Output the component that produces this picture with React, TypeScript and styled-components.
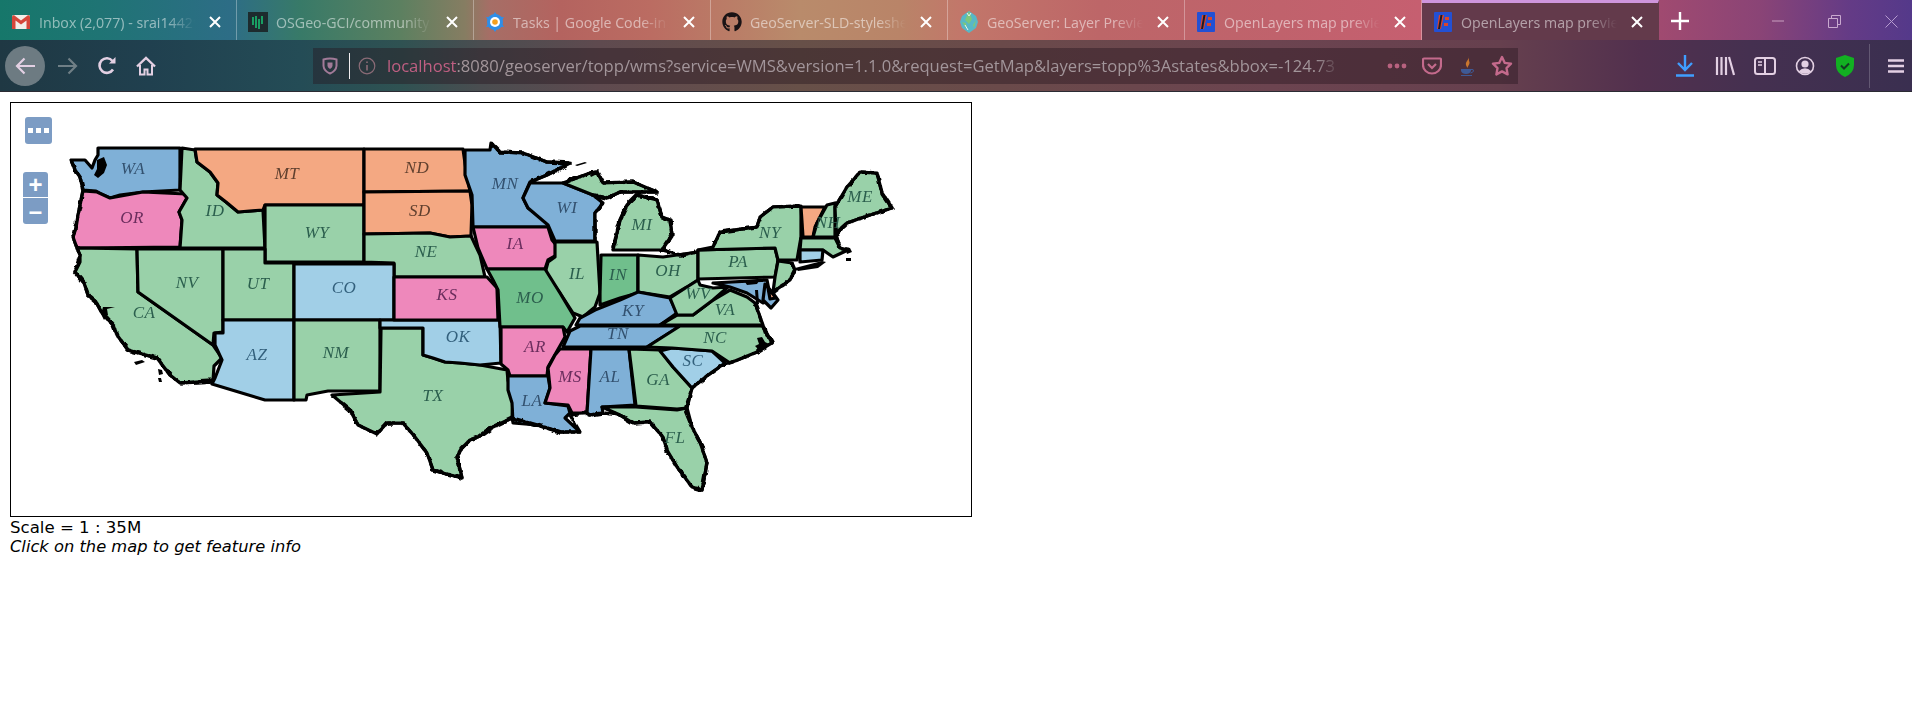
import React from "react";
import styled, { createGlobalStyle } from "styled-components";
import { FaGithub } from "react-icons/fa";

const Global = createGlobalStyle`
  html, body { margin: 0; padding: 0; background: #fff; overflow: hidden; }
  body { font-family: "DejaVu Sans", sans-serif; }
`;

const Chrome = styled.header`
  height: 92px;
  display: flex;
  flex-direction: column;
  border-bottom: 1px solid #2b2b33;
  box-sizing: border-box;
  font-family: "Open Sans", "Noto Sans", sans-serif;
`;
const TabStrip = styled.div`
  height: 40px;
  display: flex;
  background: linear-gradient(90deg, #16776a 0, #1f7474 100px, #2d6d86 230px, #387a68 300px, #5c8060 400px, #867d62 465px, #a66e66 490px, #b4635f 560px, #bb6c62 650px, #b98b6b 800px, #b98468 900px, #c2776a 960px, #bd6668 1100px, #c0626c 1280px, #c65f70 1420px, #a04a70 1660px, #8a4476 1760px, #643b86 1850px, #54398a 1912px);
`;
const Tab = styled.div<{ $active?: boolean }>`
  width: 237px;
  height: 40px;
  box-sizing: border-box;
  padding: 4px 9px 0 11px;
  display: flex;
  align-items: center;
  gap: 8px;
  position: relative;
  background: ${(p) => (p.$active ? "#633a4b" : "transparent")};
  border-right: 1px solid ${(p) => (p.$active ? "transparent" : "rgba(255,255,255,.32)")};
  border-top: ${(p) => (p.$active ? "3px solid #cf95dd" : "0")};
  padding-top: ${(p) => (p.$active ? "1px" : "4px")};
`;
const TabIcon = styled.span`
  width: 20px;
  height: 20px;
  flex: none;
  display: flex;
  align-items: center;
  justify-content: center;
`;
const TabTitle = styled.span`
  flex: 1;
  min-width: 0;
  white-space: nowrap;
  overflow: hidden;
  font-size: 14.2px;
  color: rgba(255, 255, 255, 0.52);
  mask-image: linear-gradient(to right, #000 82%, transparent 100%);
`;
const TabClose = styled.span`
  width: 24px;
  height: 24px;
  flex: none;
  display: flex;
  align-items: center;
  justify-content: center;
`;
const NewTab = styled.span`
  width: 42px;
  display: flex;
  align-items: center;
  justify-content: center;
  padding-top: 2px;
`;
const WindowControls = styled.div`
  margin-left: auto;
  display: flex;
`;
const WinButton = styled.span<{ $w: number; $ml?: number }>`
  width: ${(p) => p.$w}px;
  margin-left: ${(p) => p.$ml ?? 0}px;
  display: flex;
  align-items: center;
  justify-content: center;
  padding-top: 2px;
`;
const NavBar = styled.nav`
  flex: 1;
  display: flex;
  align-items: center;
  padding-left: 5px;
  background: linear-gradient(90deg, #1f3843 0, #20404f 150px, #244c56 300px, #2f5252 400px, #4a4d50 480px, #5f4a4f 600px, #675048 800px, #6a4a4a 1000px, #6c4450 1272px, #66404e 1500px, #52304e 1640px, #453050 1750px, #3a2f50 1912px);
`;
const BackButton = styled.span`
  width: 40px;
  height: 40px;
  margin-right: 3.5px;
  border-radius: 50%;
  background: #6d7b82;
  display: flex;
  align-items: center;
  justify-content: center;
`;
const NavButton = styled.span`
  width: 39px;
  height: 40px;
  display: flex;
  align-items: center;
  justify-content: center;
`;
const UrlBar = styled.div`
  width: 1205px;
  height: 36px;
  margin-left: 147.5px;
  display: flex;
  align-items: center;
  padding-left: 8px;
  box-sizing: border-box;
  background: rgba(38, 22, 30, 0.42);
`;
const UrlIcon = styled.span`
  width: 18px;
  height: 18px;
  flex: none;
  display: flex;
  align-items: center;
  justify-content: center;
`;
const Caret = styled.span`
  width: 1px;
  height: 26px;
  margin: 0 8px 0 10px;
  background: #f2eef0;
  flex: none;
`;
const UrlText = styled.span`
  width: 958px;
  margin: 0 34px 0 11px;
  flex: none;
  white-space: nowrap;
  overflow: hidden;
  font-size: 16.6px;
  color: #a2959a;
  mask-image: linear-gradient(to right, #000 97%, transparent 99.5%);
`;
const UrlHost = styled.span`
  color: #bf5f82;
`;
const PageAction = styled.span`
  width: 35px;
  height: 36px;
  flex: none;
  display: flex;
  align-items: center;
  justify-content: center;
`;
const ToolGroup = styled.div`
  margin-left: auto;
  display: flex;
  align-items: center;
`;
const ToolButton = styled.span`
  width: 40px;
  height: 40px;
  display: flex;
  align-items: center;
  justify-content: center;
`;
const ToolDivider = styled.span`
  width: 1px;
  height: 44px;
  margin: 0 10px 0 4px;
  background: rgba(255, 255, 255, 0.2);
`;
const MenuButton = styled.span`
  width: 32px;
  height: 40px;
  display: flex;
  align-items: center;
  justify-content: center;
`;
const Page = styled.main`
  padding: 10px;
  color: #000;
`;
const MapFrame = styled.div`
  position: relative;
  width: 962px;
  height: 415px;
  box-sizing: border-box;
  border: 1px solid #000;
  overflow: hidden;
  background: #fff;
`;
const MapCanvas = styled.svg`
  display: block;
  width: 960px;
  height: 413px;
`;
const StateLabel = styled.text`
  font-family: "Liberation Serif", serif;
  font-style: italic;
  font-size: 17px;
  text-anchor: middle;
  dominant-baseline: central;
  letter-spacing: 0.5px;
`;
const OlControl = styled.button<{ $top: number; $left: number; $w: number; $h: number; $radius: string }>`
  position: absolute;
  top: ${(p) => p.$top}px;
  left: ${(p) => p.$left}px;
  width: ${(p) => p.$w}px;
  height: ${(p) => p.$h}px;
  padding: 0;
  border: 0;
  border-radius: ${(p) => p.$radius};
  background: #7c9cc4;
  color: #fff;
  font: bold 24px/1 "Liberation Sans", sans-serif;
  display: flex;
  align-items: center;
  justify-content: center;
  gap: 3px;
`;
const Dot = styled.i`
  width: 5px;
  height: 5px;
  background: #fff;
  display: block;
`;
const Scale = styled.div`
  font-size: 16.6px;
  line-height: 19px;
  margin-top: 1px;
`;
const Hint = styled.div`
  font-size: 16.3px;
  line-height: 19px;
  font-style: italic;
`;

const C = { g: "#99d1a9", b: "#7fb0d7", p: "#ee88bb", o: "#f4a882", l: "#a1cfe7", d: "#70bf8c" };
type Shape = { id: string; c: string; d: string };
const shapes: Shape[] = [
  { id: "WA", c: C.b, d: "98,148 180,148 180,190 143,192 120,195 110,198 101,194 96,191 83,190 80,177 75,170 71,160 85,160 92,168 95,160 98,155" },
  { id: "OR", c: C.p, d: "83,191 97,192 110,198 143,192 186,194 187,198 179,212 182,220 180,247 77,248 73,237 76,228 78,215" },
  { id: "CA", c: C.g, d: "77,248 137,249 138,292 213,345 222,358 214,366 213,381 180,383 170,375 157,358 135,352 128,350 117,335 113,325 102,313 96,302 88,295 84,283 75,272 80,262 80,255" },
  { id: "NV", c: C.g, d: "137,249 223,249 223,332 214,333 213,345 138,292" },
  { id: "ID", c: C.g, d: "182,148 195,150 197,162 210,172 218,183 217,195 226,202 238,212 263,210 265,248 180,248 182,220 179,212 187,198 180,190" },
  { id: "MT", c: C.o, d: "195,149 364,149 364,205 265,205 263,210 238,212 226,202 217,195 218,183 210,172 197,162" },
  { id: "WY", c: C.g, d: "265,205 364,205 364,262 265,262" },
  { id: "ND", c: C.o, d: "364,149 463,149 466,170 470,191 364,192" },
  { id: "SD", c: C.o, d: "364,192 470,191 472,205 471,236 450,237 430,233 364,234" },
  { id: "NE", c: C.g, d: "364,234 430,233 450,237 471,236 480,255 485,277 394,277 394,263 364,262" },
  { id: "UT", c: C.g, d: "223,249 265,249 265,263 294,263 294,320 223,320" },
  { id: "CO", c: C.l, d: "294,264 394,264 394,320 294,320" },
  { id: "AZ", c: C.l, d: "223,320 294,320 294,400 265,400 212,384 215,378 222,360 215,345 215,333 223,333" },
  { id: "NM", c: C.g, d: "294,320 380,320 380,391 328,391 307,395 306,400 294,400" },
  { id: "TX", c: C.g, d: "381,328 423,328 423,355 433,358 445,362 460,363 480,365 507,370 508,380 513,400 512,418 493,427 480,436 470,440 462,448 457,457 462,478 443,473 433,470 427,453 415,437 403,423 387,423 377,434 358,425 350,410 332,395 380,392" },
  { id: "OK", c: C.l, d: "380,320 500,320 501,363 480,365 460,363 445,362 433,358 423,355 423,328 380,328" },
  { id: "KS", c: C.p, d: "394,277 487,277 497,288 498,320 394,320" },
  { id: "MN", c: C.b, d: "465,150 490,150 491,143 500,152 523,153 547,162 570,163 547,175 530,182 523,198 528,208 547,222 548,227 473,227 472,195 465,175" },
  { id: "WI", c: C.b, d: "530,183 563,183 593,195 603,203 595,213 595,241 555,241 548,225 528,208 523,198" },
  { id: "IA", c: C.p, d: "473,227 548,227 552,240 562,252 548,260 545,269 487,269 478,248" },
  { id: "IL", c: C.g, d: "555,242 597,242 600,293 595,307 583,317 573,313 560,293 545,273 548,262 555,257" },
  { id: "IN", c: C.d, d: "601,255 638,255 638,293 620,298 600,305 600,293" },
  { id: "OH", c: C.g, d: "638,255 663,257 698,252 698,280 687,287 670,297 638,292" },
  { id: "MI", c: C.g, d: "613,250 620,220 627,205 637,195 657,200 662,217 670,220 672,235 662,250" },
  { id: "UP", c: C.g, d: "563,183 590,173 597,172 603,183 633,182 657,192 637,192 620,192 607,198 593,195" },
  { id: "MO", c: C.d, d: "487,269 545,269 560,293 575,318 567,332 563,327 500,327 498,290 493,280" },
  { id: "AR", c: C.p, d: "501,327 563,327 565,337 548,367 547,376 510,376 508,370 501,364" },
  { id: "LA", c: C.b, d: "508,376 548,376 550,388 545,403 568,406 570,413 565,418 580,432 560,432 537,425 513,423 512,403 508,390" },
  { id: "MS", c: C.p, d: "560,349 591,349 587,413 572,413 568,405 545,403 550,388 548,368 555,355" },
  { id: "TN", c: C.b, d: "570,331 580,326 680,326 647,347 563,347" },
  { id: "KY", c: C.b, d: "576,325 580,318 595,310 620,300 638,292 670,298 677,313 660,325" },
  { id: "AL", c: C.b, d: "591,349 629,349 635,405 602,407 603,413 590,415 587,413" },
  { id: "GA", c: C.g, d: "629,349 660,350 673,367 692,388 687,408 677,409 636,406" },
  { id: "SC", c: C.l, d: "660,351 672,348 712,351 725,363 708,375 692,388 673,367" },
  { id: "NC", c: C.g, d: "647,347 680,326 763,326 772,343 757,352 730,363 712,351 672,348" },
  { id: "FL", c: C.g, d: "602,407 636,407 677,410 687,408 692,427 700,442 707,463 702,490 692,487 677,467 667,450 663,437 650,422 633,423 620,415" },
  { id: "VA", c: C.g, d: "660,325 677,315 693,315 713,300 730,290 747,297 755,303 763,325" },
  { id: "WV", c: C.g, d: "670,298 687,287 698,280 700,285 713,288 728,287 713,300 693,315 677,315" },
  { id: "PA", c: C.g, d: "698,250 775,248 778,260 775,277 698,279" },
  { id: "NY", c: C.g, d: "698,250 713,247 720,232 757,227 760,217 773,207 801,206 801,237 797,260 778,260 775,248" },
  { id: "NJ", c: C.g, d: "778,261 792,263 795,270 790,280 773,292 775,277" },
  { id: "MD", c: C.b, d: "713,283 767,280 771,300 763,303 747,293 730,287" },
  { id: "DM", c: C.b, d: "765,284 772,292 778,300 771,308 763,300" },
  { id: "DE", c: C.o, d: "768,288 776,298 770,299" },
  { id: "VT", c: C.o, d: "801,207 825,207 815,227 813,237 803,237" },
  { id: "NH", c: C.g, d: "827,205 835,203 835,237 813,237 817,223" },
  { id: "ME", c: C.g, d: "835,207 847,187 860,172 877,173 882,193 892,208 870,215 847,223 836,233" },
  { id: "MA", c: C.g, d: "801,238 835,238 840,248 848,250 833,257 823,250 800,250" },
  { id: "CT", c: C.l, d: "800,250 823,250 822,260 800,262" },
];
const coast = [
  "71,160 75,170 80,177 83,190 78,215 73,237 77,248 80,255 75,272 84,283 88,295 96,302 102,313 113,325 117,335 128,350 157,358 170,375 180,383 213,381",
  "332,395 350,410 358,425 377,434 387,423 403,423 415,437 427,453 433,470 443,473 462,478 457,457 462,448 470,440 480,436 493,427 512,418 537,425 560,432 580,432 570,415 586,413 590,415 603,413 620,415 633,423 650,422 663,437 667,450 677,467 692,487 702,490 707,463 700,442 692,427 685,410 692,388 708,375 725,363 730,363 757,352 772,343 763,326 755,303",
  "491,143 500,152 523,153 547,162 570,163 547,175 530,182",
  "563,183 590,173 597,172 603,183 633,182 657,192 637,192 620,192 607,198 593,195 603,203 595,213 595,240",
  "613,250 620,220 627,205 637,195 657,200 662,217 670,220 672,235 662,250 680,255 698,252",
  "713,247 720,232 757,227 760,217 773,207 801,206",
  "835,207 847,187 860,172 877,173 882,193 892,208 870,215 847,223 836,233 840,248 848,250",
  "792,263 795,270 790,280 773,292",
];
const Ink = { g: "#2c5f4e", b: "#33516f", p: "#6b2d5d", o: "#60402f", l: "#33607c" };
const labels: [string, number, number, string][] = [
  ["WA", 133, 168, Ink.b], ["MT", 287, 173, Ink.o], ["ND", 417, 167, Ink.o], ["SD", 420, 210, Ink.o], ["MN", 505, 183, Ink.b],
  ["WI", 567, 207, Ink.b], ["OR", 132, 217, Ink.p], ["ID", 215, 210, Ink.g], ["WY", 317, 232, Ink.g], ["NE", 426, 251, Ink.g],
  ["IA", 515, 243, Ink.p], ["IL", 577, 273, Ink.g], ["IN", 618, 274, Ink.g], ["OH", 668, 270, Ink.g], ["NV", 187, 282, Ink.g],
  ["UT", 258, 283, Ink.g], ["CA", 144, 312, Ink.g], ["CO", 344, 287, Ink.l], ["KS", 447, 294, Ink.p], ["MO", 530, 297, Ink.g],
  ["OK", 458, 336, Ink.l], ["AZ", 257, 354, Ink.l], ["NM", 336, 352, Ink.g], ["TX", 433, 395, Ink.g], ["AR", 535, 346, Ink.p],
  ["KY", 633, 310, Ink.b], ["TN", 618, 333, Ink.b], ["VA", 725, 309, Ink.g], ["WV", 698, 293, Ink.g], ["NC", 715, 337, Ink.g],
  ["SC", 693, 360, Ink.l], ["GA", 658, 379, Ink.g], ["AL", 610, 376, Ink.b], ["MS", 570, 376, Ink.p], ["LA", 532, 400, Ink.b],
  ["FL", 675, 437, Ink.g], ["PA", 738, 261, Ink.g], ["NY", 770, 232, Ink.g], ["MI", 642, 224, Ink.g], ["ME", 860, 196, Ink.g], ["NH", 828, 222, Ink.g],
];

const Close = () => (
  <svg width="14" height="14" viewBox="0 0 14 14"><path d="M2 2l10 10M12 2L2 12" stroke="#fff" strokeWidth="2" /></svg>
);
const Gmail = () => (
  <svg width="18" height="14" viewBox="0 0 18 14"><rect width="18" height="14" rx="1.5" fill="#f2efe9" /><path d="M0 1.5v12.5h3.5V5.5L9 9.5l5.500-4V14H18V1.500L16.200 0 9 5.400 1.800 0z" fill="#d5473a" /></svg>
);
const GciTab = () => (
  <svg width="20" height="20" viewBox="0 0 20 20"><rect width="20" height="20" fill="#1d2b2e" /><path d="M5 5v8M8 4v12M11 7v10M14 4v8" stroke="#19d07a" strokeWidth="1.4" /></svg>
);
const CodeIn = () => (
  <svg width="20" height="20" viewBox="0 0 20 20"><circle cx="10" cy="10" r="8" fill="#2e8ee8" /><path d="M10 0l2 3h-4zM10 20l-2-3h4zM1 5l3.500.3L2.800 8zM19 15l-3.500-.3 1.700-2.700zM1 15l1.800-3 1.700 2.700zM19 5l-1.800 3-1.700-2.700z" fill="#2e8ee8" /><circle cx="10" cy="10" r="5" fill="#fff" /><circle cx="10" cy="10" r="2.800" fill="#f5a01e" /></svg>
);
const GeoServer = () => (
  <svg width="20" height="24" viewBox="0 0 20 24"><path d="M10 1l7 5 2 6-2 6-7 5-7-5-2-6 2-6z" fill="#57b7c7" /><path d="M10 1l3 8-3 5-4-4zM3 12l4 1 1 6zM17 10l-3 5 1 3z" fill="#7fc77a" /><path d="M8 3l2 3 2-3M6 15l3 5" stroke="#e7f5f1" strokeWidth="1" fill="none" /></svg>
);
const OpenLayersIcon = () => (
  <svg width="20" height="22" viewBox="0 0 20 22"><rect x="1" y="1" width="18" height="20" rx="1" fill="#2350d4" /><path d="M6 4h5l-3 14H4z" fill="#d8452d" /><path d="M7.500 4h2L7 18H5z" fill="#1b1b2a" /><rect x="12" y="6" width="4" height="3" fill="#d8452d" /><rect x="11" y="12" width="4" height="3" fill="#d8452d" /></svg>
);

const P = "#e3d0e3";
const tabs = [
  { t: "Inbox (2,077) - srai14429", i: <Gmail /> },
  { t: "OSGeo-GCI/community", i: <GciTab /> },
  { t: "Tasks | Google Code-in", i: <CodeIn /> },
  { t: "GeoServer-SLD-styleshe", i: <FaGithub size={20} color="#1a1315" /> },
  { t: "GeoServer: Layer Previe", i: <GeoServer /> },
  { t: "OpenLayers map previe", i: <OpenLayersIcon /> },
  { t: "OpenLayers map previe", i: <OpenLayersIcon />, a: true },
];

export default function App() {
  return (
    <>
      <Global />
      <Chrome>
        <TabStrip>
          {tabs.map((tab, n) => (
            <Tab key={n} $active={tab.a}>
              <TabIcon>{tab.i}</TabIcon>
              <TabTitle>{tab.t}</TabTitle>
              <TabClose><Close /></TabClose>
            </Tab>
          ))}
          <NewTab>
            <svg width="18" height="18" viewBox="0 0 18 18"><path d="M9 0v18M0 9h18" stroke="#fff" strokeWidth="2.400" /></svg>
          </NewTab>
          <WindowControls>
            <WinButton $w={56}>
              <svg width="12" height="12" viewBox="0 0 12 12"><path d="M0 6h12" stroke="#c9a0c0" strokeWidth="1" /></svg>
            </WinButton>
            <WinButton $w={57}>
              <svg width="13" height="13" viewBox="0 0 13 13" fill="none" stroke="#c9a9cf"><path d="M.5 3.500h9v9h-9zM3.500 3V.5h9v9H10" /></svg>
            </WinButton>
            <WinButton $w={42} $ml={7}>
              <svg width="13" height="13" viewBox="0 0 13 13"><path d="M.5.5l12 12M12.500.5l-12 12" stroke="#b69bd0" strokeWidth="1" /></svg>
            </WinButton>
          </WindowControls>
        </TabStrip>
        <NavBar>
          <BackButton>
            <svg width="20" height="18" viewBox="0 0 20 18" fill="none" stroke={P} strokeWidth="2.200"><path d="M20 9H2M9.500 1.500L2 9l7.500 7.500" /></svg>
          </BackButton>
          <NavButton>
            <svg width="20" height="18" viewBox="0 0 20 18" fill="none" stroke="#6f7f86" strokeWidth="2.200"><path d="M0 9h18M10.500 1.500L18 9l-7.500 7.500" /></svg>
          </NavButton>
          <NavButton>
            <svg width="20" height="20" viewBox="0 0 20 20" fill="none" stroke={P} strokeWidth="2.600"><path d="M16 13.500A7.300 7.300 0 1 1 15.500 5" /><path d="M18.500 1v6.500H12" fill={P} stroke="none" /></svg>
          </NavButton>
          <NavButton>
            <svg width="20" height="20" viewBox="0 0 20 20" fill="none" stroke={P} strokeWidth="2"><path d="M1 10.500L10 2l9 8.500" strokeWidth="2.400" /><path d="M4 9v9.500h4.500v-5h3v5H16V9" /></svg>
          </NavButton>
          <UrlBar>
            <UrlIcon>
              <svg width="16" height="18" viewBox="0 0 16 18" fill="none" stroke="#a27a98" strokeWidth="2"><path d="M1.500 2.500Q8 .5 14.500 2.500V9Q14 14 8 16.500 2 14 1.500 9z" /><path d="M5.500 5.500h5V9Q10 11 8 12 6 11 5.500 9z" fill="#a27a98" stroke="none" /></svg>
            </UrlIcon>
            <Caret />
            <UrlIcon>
              <svg width="18" height="18" viewBox="0 0 18 18" fill="none" stroke="#8a6b76" strokeWidth="1.200"><circle cx="9" cy="9" r="7.800" /><path d="M9 8v5.500M9 4.500v1.500" strokeWidth="1.600" /></svg>
            </UrlIcon>
            <UrlText>
              <UrlHost>localhost</UrlHost>:8080/geoserver/topp/wms?service=WMS&amp;version=1.1.0&amp;request=GetMap&amp;layers=topp%3Astates&amp;bbox=-124.73
            </UrlText>
            <PageAction>
              <svg width="20" height="6" viewBox="0 0 20 6" fill="#b8627f"><circle cx="3" cy="3" r="2.400" /><circle cx="10" cy="3" r="2.400" /><circle cx="17" cy="3" r="2.400" /></svg>
            </PageAction>
            <PageAction>
              <svg width="20" height="18" viewBox="0 0 20 18" fill="none" stroke="#c46a8c" strokeWidth="2.200"><path d="M2 1.500h16a1 1 0 0 1 1 1V8a9 8.500 0 0 1-18 0V2.500a1 1 0 0 1 1-1z" /><path d="M6 7l4 4 4-4" /></svg>
            </PageAction>
            <PageAction>
              <svg width="16" height="22" viewBox="0 0 16 22"><path d="M9 1C11 5 6 6 7 10c.4 1.500 1.500 2.500 2 3-1-2 3-4 1-7 0-2-.5-3.500-1-5z" fill="#c9762e" /><path d="M2 14h10v2q-1 3-5 3t-5-3z" fill="#3f5a96" /><path d="M12 14.500q3-.5 2.500 1.500-.5 1.500-3 2" stroke="#3f5a96" fill="none" /><path d="M2 20.500h11" stroke="#3f5a96" /></svg>
            </PageAction>
            <PageAction>
              <svg width="22" height="21" viewBox="0 0 22 21" fill="none" stroke="#c46a8c" strokeWidth="2.400" strokeLinejoin="round"><path d="M11 2l2.800 5.900 6.200.8-4.500 4.400 1.100 6.300L11 16.400l-5.600 3 1.100-6.300L2 8.700l6.200-.8z" /></svg>
            </PageAction>
          </UrlBar>
          <ToolGroup>
            <ToolButton>
              <svg width="20" height="22" viewBox="0 0 20 22" fill="none" stroke="#3f9eff" strokeWidth="2.400"><path d="M10 0v14M3 8l7 7 7-7M1 20.500h18" /></svg>
            </ToolButton>
            <ToolButton>
              <svg width="20" height="20" viewBox="0 0 20 20" fill="none" stroke={P} strokeWidth="2.200"><path d="M2 1v18M6.500 1v18M11 1v18M14 1l5 18" /></svg>
            </ToolButton>
            <ToolButton>
              <svg width="22" height="18" viewBox="0 0 22 18" fill="none" stroke={P} strokeWidth="2"><rect x="1" y="1" width="20" height="16" rx="2.500" /><path d="M11 1v16" /><path d="M4 5h4M4 8h4" strokeWidth="1.500" /></svg>
            </ToolButton>
            <ToolButton>
              <svg width="20" height="20" viewBox="0 0 20 20" fill="none" stroke={P} strokeWidth="1.600"><circle cx="10" cy="10" r="8.500" /><circle cx="10" cy="8" r="3.600" fill={P} stroke="none" /><path d="M3.500 15.500q6.500-6.500 13 0Q10 20 3.500 15.500z" fill={P} stroke="none" /></svg>
            </ToolButton>
            <ToolButton>
              <svg width="18" height="22" viewBox="0 0 18 22"><path d="M9 0l9 3v7q0 8-9 12Q0 18 0 10V3z" fill="#12b022" /><path d="M5 10.500l3 3 5-5" stroke="#123c22" strokeWidth="2" fill="none" /></svg>
            </ToolButton>
            <ToolDivider />
            <MenuButton>
              <svg width="16" height="14" viewBox="0 0 16 14" fill="none" stroke={P} strokeWidth="2.400"><path d="M0 1.500h16M0 7h16M0 12.500h16" /></svg>
            </MenuButton>
          </ToolGroup>
        </NavBar>
      </Chrome>
      <Page>
        <MapFrame>
          <MapCanvas viewBox="11 103 960 413">
            <defs>
              <filter id="soft" x="11" y="103" width="960" height="413" filterUnits="userSpaceOnUse"><feGaussianBlur stdDeviation="0.45" /></filter>
              <filter id="rough" x="11" y="103" width="960" height="413" filterUnits="userSpaceOnUse">
                <feTurbulence type="fractalNoise" baseFrequency="0.16" numOctaves="2" seed="4" result="n" />
                <feDisplacementMap in="SourceGraphic" in2="n" scale="5" xChannelSelector="R" yChannelSelector="G" />
              </filter>
            </defs>
            <g filter="url(#soft)">
              {shapes.map((s) => (
                <polygon key={s.id} points={s.d} fill={s.c} stroke="#000" strokeWidth="3.200" strokeLinejoin="round" />
              ))}
              <g filter="url(#rough)" fill="none" stroke="#000" strokeWidth="3.400" strokeLinejoin="round">
                {coast.map((pts, n) => (
                  <polyline key={n} points={pts} />
                ))}
              </g>
              <path d="M97 160l7-3 3 8-3 8-6 5-4-3 3-6z" fill="#000" />
              <path d="M103 307h12l-8 2 1 6-4 5-3-6z" fill="#000" />
              <path d="M134 362l8-2 3 2-9 3zM158 369l4 1 1 4-4 1zM158 378h3l1 4-3 0z" fill="#000" />
              <path d="M575 165l10-3 2 1-10 3zM590 175l6-3 1 2-6 3z" fill="#000" />
              <path d="M795 268l27-7 4 1-8 6-20 3z" fill="#000" />
              <path d="M845 247l5 1 2 4-5 2zM846 258h5v3h-5z" fill="#000" />
              <path d="M757 338l5-1 3 5 4 2-3 4-8 1-3-3 4-2zM762 328l4 0 1 5-3 1z" fill="#000" />
              <path d="M755 290l3 0 1 14-3 0zM745 282l14-1-2 3-10 1z" fill="#000" />
              {labels.map(([t, x, y, c]) => (
                <StateLabel key={t} x={x} y={y} fill={c}>{t}</StateLabel>
              ))}
            </g>
          </MapCanvas>
          <OlControl $top={14} $left={14} $w={27} $h={27} $radius="3px"><Dot /><Dot /><Dot /></OlControl>
          <OlControl $top={69} $left={12} $w={25} $h={25} $radius="3px 3px 0 0">+</OlControl>
          <OlControl $top={95} $left={12} $w={25} $h={26} $radius="0 0 3px 3px">–</OlControl>
        </MapFrame>
        <Scale>Scale = 1 : 35M</Scale>
        <Hint>Click on the map to get feature info</Hint>
      </Page>
    </>
  );
}
